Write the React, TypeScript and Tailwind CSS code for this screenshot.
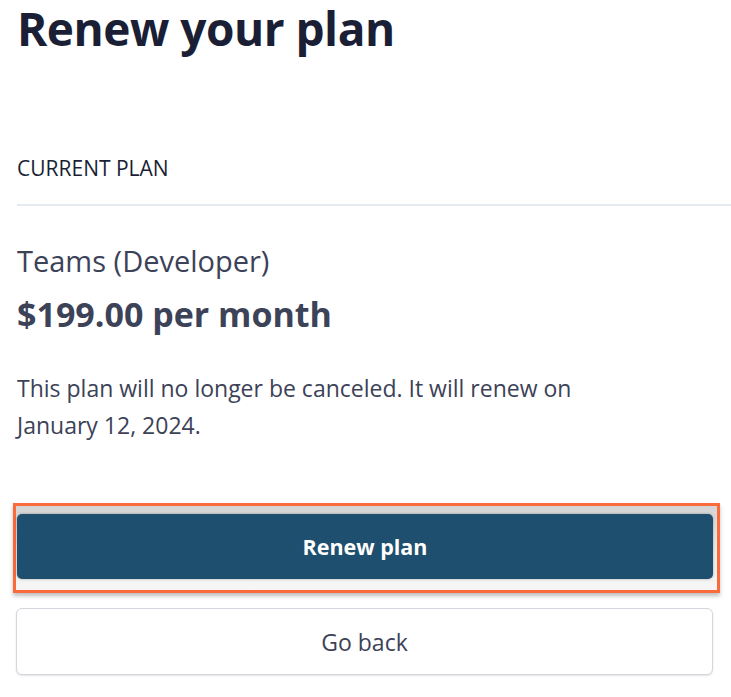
export default function App() {
  return (
    <div className="w-[731px] h-[697px] overflow-hidden bg-white pl-[17px] font-['Open_Sans',sans-serif]">
      <h1 className="h-[56px] text-[46px] leading-[56px] font-bold text-[#1a1f36] tracking-[-0.5px] whitespace-nowrap">
        Renew your plan
      </h1>
      <div className="mt-[100px] h-[24px] text-[21px] leading-[24px] text-[#1a1f36]">CURRENT PLAN</div>
      <div className="mt-[24px] h-[2px] bg-[#e6ebf1] w-[714px]" />
      <div className="mt-[38px] h-[34px] text-[29px] leading-[34px] text-[#3c4257]">Teams (Developer)</div>
      <div className="mt-[16px] h-[40px] text-[34px] leading-[40px] font-bold text-[#3c4257]">$199.00 per month</div>
      <p className="mt-[36px] w-[600px] text-[23px] leading-[37px] text-[#3c4257]">
        This plan will no longer be canceled. It will renew on January 12, 2024.
      </p>
      <div className="mt-[59px] ml-[-4px] w-[707px] h-[90px] border-[3px] border-[#fb6a3b] bg-linear-to-b from-[#d4d4d4] via-[#ececec] to-[#f6f6f6] pt-[8px] pl-[1px] pr-[4px] pb-[11px] shadow-[0_3px_4px_rgba(0,0,0,0.25)]">
        <button className="w-full h-[65px] rounded-[5px] bg-[#1e4f6e] text-white text-[21.5px] font-bold shadow-[0_0_3px_rgba(0,0,0,0.3)] pt-[2px]">
          Renew plan
        </button>
      </div>
      <button className="mt-[15px] ml-[-1px] w-[697px] h-[67px] rounded-[6px] border border-[#d3d7dd] bg-white text-[23px] text-[#3c4257] shadow-[0_1px_2px_rgba(0,0,0,0.12)] pt-[2px]">
        Go back
      </button>
    </div>
  );
}
